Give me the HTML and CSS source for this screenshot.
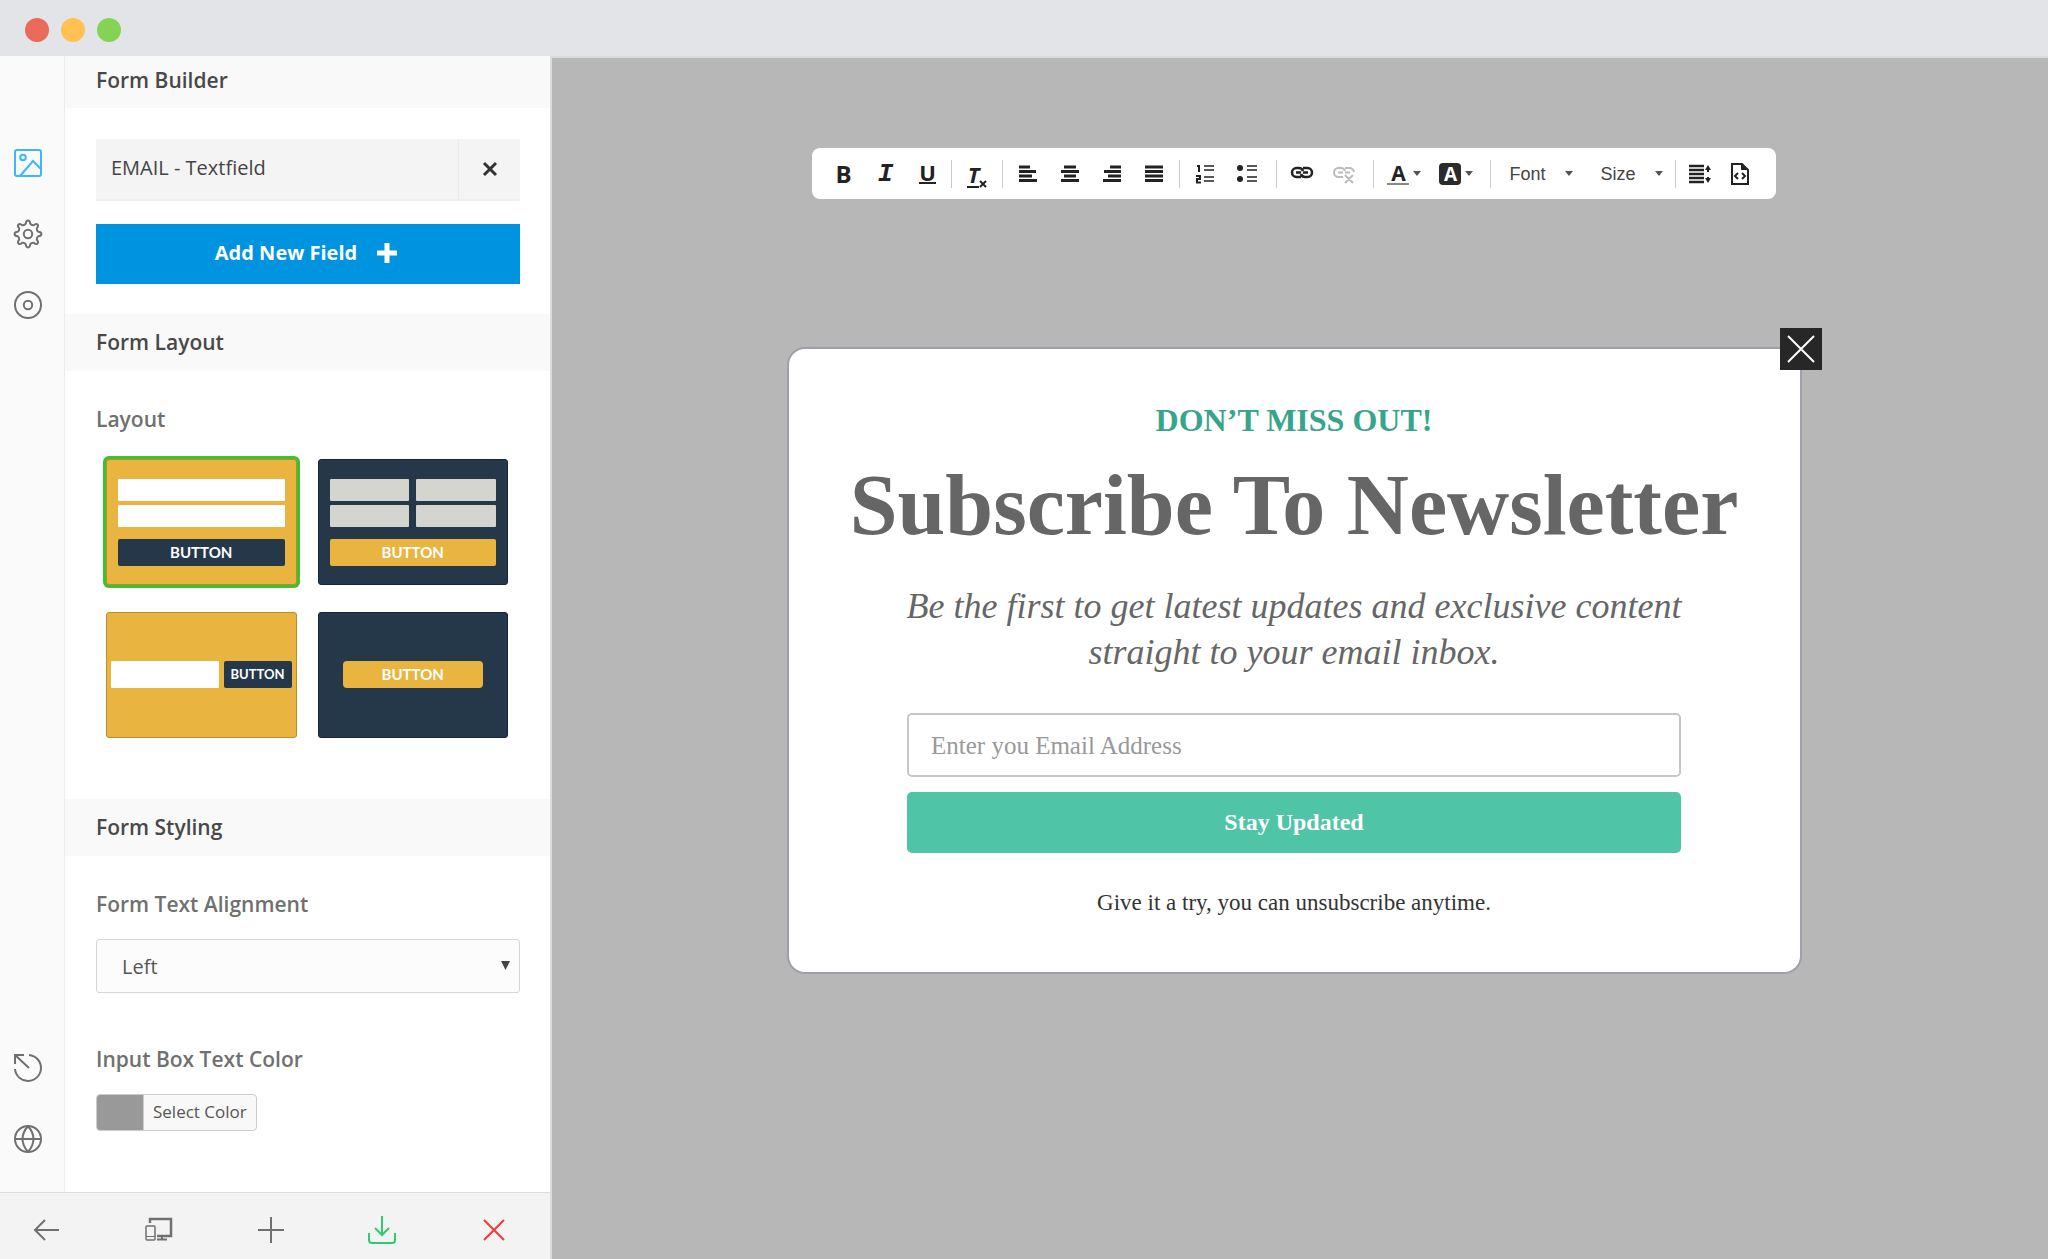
FILE: index.html
```
<!DOCTYPE html>
<html lang="en">
<head>
    <meta charset="UTF-8">
    <meta name="viewport" content="width=device-width, initial-scale=1.0">
    <title>Form Builder</title>
    <link rel="stylesheet" href="styles.css">
</head>
<body>
    <header class="titlebar">
        <span class="dot dot-red"></span>
        <span class="dot dot-yellow"></span>
        <span class="dot dot-green"></span>
    </header>

    <div class="app">
        <aside class="sidebar">
            <div class="sidebar-main">
                <nav class="rail">
                    <button type="button" class="rail-btn active" aria-label="Design">
                        <svg viewBox="-15 -15 30 30"><rect x="-13" y="-13" width="26" height="26" rx="2"/><circle cx="-5" cy="-5.500" r="2.800"/><path d="M-8 13L5-2L13 6"/></svg>
                    </button>
                    <button type="button" class="rail-btn" aria-label="Settings">
                        <svg viewBox="-15 -15 30 30"><path d="M-2.200-10.300C-1.900-14.500 1.900-14.500 2.200-10.300Q3.500-8.500 5.700-8.800C8.900-11.600 11.600-8.900 8.800-5.700Q8.500-3.500 10.300-2.200C14.500-1.900 14.500 1.900 10.300 2.200Q8.500 3.500 8.800 5.700C11.600 8.900 8.900 11.600 5.700 8.800Q3.500 8.500 2.200 10.300C1.900 14.500-1.900 14.500-2.200 10.300Q-3.500 8.500-5.700 8.800C-8.900 11.600-11.600 8.900-8.800 5.700Q-8.500 3.500-10.300 2.200C-14.500 1.900-14.500-1.900-10.300-2.200Q-8.500-3.500-8.800-5.700C-11.600-8.900-8.900-11.600-5.700-8.800Q-3.500-8.500-2.200-10.300Z"/><circle r="4.200"/></svg>
                    </button>
                    <button type="button" class="rail-btn" aria-label="Targeting">
                        <svg viewBox="-15 -15 30 30"><circle r="13"/><circle r="4.200"/></svg>
                    </button>
                    <button type="button" class="rail-btn rail-bottom" aria-label="Reset">
                        <svg viewBox="-15 -15 30 30"><path d="M1-13A13 13 0 1 1-13 1M1 0L-13-13M-13-4V-13H-4"/></svg>
                    </button>
                    <button type="button" class="rail-btn" aria-label="Language">
                        <svg viewBox="-15 -15 30 30"><circle r="13"/><path d="M-13 0H13M0-13Q-11 0 0 13M0-13Q11 0 0 13"/></svg>
                    </button>
                </nav>

                <div class="panel">
                    <h2 class="section-title first">Form Builder</h2>
                    <div class="section">
                        <div class="field">
                            <span class="field-name">EMAIL - Textfield</span>
                            <button type="button" class="field-remove" aria-label="Remove field">
                                <svg viewBox="0 0 16 16"><path d="M2 2L14 14M14 2L2 14"/></svg>
                            </button>
                        </div>
                        <button type="button" class="add-field">
                            Add New Field
                            <svg viewBox="0 0 20 20"><path d="M10 0V20M0 10H20"/></svg>
                        </button>
                    </div>

                    <h2 class="section-title">Form Layout</h2>
                    <div class="section layout-section">
                        <h3 class="label">Layout</h3>
                        <div class="layouts">
                            <button type="button" class="thumb yellow stacked selected" aria-pressed="true">
                                <span class="bar"></span>
                                <span class="bar"></span>
                                <span class="thumb-btn">BUTTON</span>
                            </button>
                            <button type="button" class="thumb navy columns" aria-pressed="false">
                                <span class="bar"></span>
                                <span class="bar"></span>
                                <span class="bar"></span>
                                <span class="bar"></span>
                                <span class="thumb-btn">BUTTON</span>
                            </button>
                            <button type="button" class="thumb yellow inline" aria-pressed="false">
                                <span class="bar"></span>
                                <span class="thumb-btn">BUTTON</span>
                            </button>
                            <button type="button" class="thumb navy single" aria-pressed="false">
                                <span class="thumb-btn">BUTTON</span>
                            </button>
                        </div>
                    </div>

                    <h2 class="section-title">Form Styling</h2>
                    <div class="section styling-section">
                        <label class="label" for="textAlign">Form Text Alignment</label>
                        <div class="select-wrap">
                            <select id="textAlign">
                                <option>Left</option>
                                <option>Center</option>
                                <option>Right</option>
                            </select>
                            <svg class="select-arrow" viewBox="0 0 10 10"><path d="M0 0H10L5 10Z"/></svg>
                        </div>
                        <h3 class="label">Input Box Text Color</h3>
                        <button type="button" class="color-btn">
                            <span class="swatch"></span>
                            <span class="color-text">Select Color</span>
                        </button>
                    </div>
                </div>
            </div>

            <footer class="actions">
                <button type="button" class="action" aria-label="Back">
                    <svg viewBox="0 0 28 28"><path d="M26 14H2M12 4L2 14L12 24"/></svg>
                </button>
                <button type="button" class="action" aria-label="Preview devices">
                    <svg viewBox="0 0 28 28"><path d="M5 7V3H26V20H12" stroke-width="2.500"/><path d="M17 20V23M12 23.500H22"/><rect x="1" y="10" width="9" height="14" rx="1" stroke-width="1.500"/><path d="M1 20.500H10" stroke-width="1"/></svg>
                </button>
                <button type="button" class="action" aria-label="Add">
                    <svg viewBox="0 0 28 28"><path d="M14 1V27M1 14H27"/></svg>
                </button>
                <button type="button" class="action save" aria-label="Save">
                    <svg viewBox="0 0 28 28"><path d="M14 0V19M7 12L14 19L21 12M1 17V24Q1 27 4 27H24Q27 27 27 24V17"/></svg>
                </button>
                <button type="button" class="action close" aria-label="Close">
                    <svg viewBox="0 0 28 28"><path d="M4 4L24 24M24 4L4 24"/></svg>
                </button>
            </footer>
        </aside>

        <main class="canvas">
            <div class="toolbar">
                <div class="group first">
                    <button type="button" class="tool bold">B</button>
                    <button type="button" class="tool italic">I</button>
                    <button type="button" class="tool underline"><span>U</span></button>
                </div>
                <div class="group">
                    <button type="button" class="tool clear" aria-label="Remove format">
                        <span class="clear-t">T</span>
                        <svg viewBox="0 0 8 8"><path d="M1 1L7 7M7 1L1 7"/></svg>
                    </button>
                </div>
                <div class="group">
                    <button type="button" class="tool" aria-label="Align left">
                        <svg viewBox="0 0 24 24"><path d="M3 5H14M3 9.500H20M3 14H16M3 18.500H21"/></svg>
                    </button>
                    <button type="button" class="tool" aria-label="Align center">
                        <svg viewBox="0 0 24 24"><path d="M6 5H18M3 9.500H21M6 14H18M3 18.500H21"/></svg>
                    </button>
                    <button type="button" class="tool" aria-label="Align right">
                        <svg viewBox="0 0 24 24"><path d="M10 5H21M4 9.500H21M8 14H21M3 18.500H21"/></svg>
                    </button>
                    <button type="button" class="tool" aria-label="Justify">
                        <svg viewBox="0 0 24 24"><path d="M3 5H21M3 9.500H21M3 14H21M3 18.500H21"/></svg>
                    </button>
                </div>
                <div class="group wide">
                    <button type="button" class="tool" aria-label="Numbered list">
                        <svg viewBox="0 0 24 24"><path d="M11 4H21M11 8H21M11 15H21M11 19H21" stroke-width="1.500"/><path d="M4 4H6V10M3 14H7V17H4V20.500H8" stroke-width="2"/></svg>
                    </button>
                    <button type="button" class="tool" aria-label="Bulleted list">
                        <svg viewBox="0 0 24 24"><path d="M12 4H22M12 8H22M12 15H22M12 19H22" stroke-width="1.500"/><circle class="fill" cx="5" cy="6" r="3"/><circle class="fill" cx="5" cy="17" r="3"/></svg>
                    </button>
                </div>
                <div class="group wide">
                    <button type="button" class="tool" aria-label="Link">
                        <svg viewBox="0 0 24 24"><path d="M11 15H6.500A4.500 4.500 0 0 1 6.500 6H9Q12 6 13 9M13 6H17.500A4.500 4.500 0 0 1 17.500 15H15Q12 15 11 12M6 10.500H11M13 10.500H18" stroke-width="2.500"/></svg>
                    </button>
                    <button type="button" class="tool disabled" aria-label="Unlink" disabled>
                        <svg viewBox="0 0 24 24"><path d="M11 15H6.500A4.500 4.500 0 0 1 6.500 6H9Q12 6 13 9M13 6H17.500Q21 6 22 10M6 10.500H11M13 10.500H18M13 13L21 21M21 13L13 21" stroke-width="2"/></svg>
                    </button>
                </div>
                <div class="group wide">
                    <button type="button" class="tool with-caret" aria-label="Text color">
                        <span class="letter color-a">A</span><span class="caret"></span>
                    </button>
                    <button type="button" class="tool with-caret" aria-label="Background color">
                        <span class="letter box-a">A</span><span class="caret"></span>
                    </button>
                </div>
                <div class="group selects">
                    <button type="button" class="combo">Font <span class="caret"></span></button>
                    <button type="button" class="combo">Size <span class="caret"></span></button>
                </div>
                <div class="group last">
                    <button type="button" class="tool" aria-label="Line height">
                        <svg viewBox="0 0 24 24"><path d="M1 4H16M1 8H16M1 12H16M1 16H16M1 20H16" stroke-width="2.500"/><path d="M20 6V10M20 15V19" stroke-width="2"/><path class="fill" d="M17 8L20 3L23 8ZM17 16L20 21L23 16Z"/></svg>
                    </button>
                    <button type="button" class="tool" aria-label="Source">
                        <svg viewBox="0 0 24 24"><path d="M4 2H14L20 8V22H4ZM10 11L7 14L10 17M14 11L17 14L14 17" stroke-width="2"/><path class="fill" d="M13 2V8H20Z"/></svg>
                    </button>
                </div>
            </div>

            <form class="popup">
                <button type="button" class="popup-close" aria-label="Close popup">
                    <svg viewBox="0 0 28 28"><path d="M1 1L27 27M27 1L1 27"/></svg>
                </button>
                <p class="eyebrow">DON’T MISS OUT!</p>
                <h1>Subscribe To Newsletter</h1>
                <p class="lead">Be the first to get latest updates and exclusive content straight to your email inbox.</p>
                <input type="email" class="email" placeholder="Enter you Email Address" aria-label="Email Address">
                <button type="submit" class="submit">Stay Updated</button>
                <p class="note">Give it a try, you can unsubscribe anytime.</p>
            </form>
        </main>
    </div>
</body>
</html>
```

FILE: styles.css
```
* {
    box-sizing: border-box;
}
body {
    margin: 0;
    min-height: 100vh;
    display: flex;
    flex-direction: column;
    font-family: "Open Sans", "Noto Sans", sans-serif;
    font-size: 20px;
    color: #444;
    background: #fff;
}
button {
    font-family: inherit;
    padding: 0;
    border: none;
    background: none;
    cursor: pointer;
}
h1, h2, h3, p {
    margin: 0;
}
svg {
    display: block;
    fill: none;
    stroke: currentColor;
}

/* window bar */
.titlebar {
    height: 56px;
    display: flex;
    align-items: center;
    gap: 12px;
    padding: 4px 25px 0;
    background: #e3e4e8;
}
.dot {
    width: 24px;
    height: 24px;
    border-radius: 50%;
}
.dot-red {
    background: #e96b5a;
}
.dot-yellow {
    background: #ffc151;
}
.dot-green {
    background: #84d355;
}
.app {
    flex: 1;
    display: flex;
}

/* sidebar */
.sidebar {
    flex: 0 0 552px;
    display: flex;
    flex-direction: column;
    border-right: 2px solid #dcdcdc;
}
.sidebar-main {
    flex: 1;
    display: flex;
}
.rail {
    flex: 0 0 65px;
    display: flex;
    flex-direction: column;
    align-items: center;
    gap: 41px;
    padding: 92px 8px 38px 0;
    background: #fafafa;
    border-right: 1px solid #ececec;
}
.rail-btn {
    color: #707070;
}
.rail-btn.active {
    color: #3db5ff;
}
.rail-bottom {
    margin-top: auto;
}
.rail-btn svg {
    width: 30px;
    height: 30px;
    stroke-width: 2;
}
.panel {
    flex: 1;
}
.section-title {
    height: 57px;
    padding: 0 31px;
    line-height: 57px;
    font-size: 21px;
    font-weight: 600;
    color: #484848;
    background: #f9f9f9;
}
.section-title.first {
    height: 52px;
    line-height: 48px;
}
.section {
    padding: 31px 30px 30px 31px;
}
.label {
    display: block;
    line-height: 28px;
    font-size: 21px;
    font-weight: 600;
    color: #707070;
}
.field {
    display: flex;
    height: 62px;
    margin-bottom: 23px;
    background: #f4f4f4;
    border-bottom: 2px solid #eee;
}
.field-name {
    flex: 1;
    padding-left: 15px;
    line-height: 58px;
    font-size: 20px;
}
.field-remove {
    width: 62px;
    display: flex;
    align-items: center;
    justify-content: center;
    border-left: 1px solid #eaeaea;
    color: #333;
}
.field-remove svg {
    width: 16px;
    height: 16px;
    stroke-width: 3;
}
.add-field {
    width: 100%;
    height: 60px;
    padding: 0 4px 3px 0;
    display: flex;
    align-items: center;
    justify-content: center;
    gap: 20px;
    font-size: 20px;
    font-weight: 700;
    color: #fff;
    background: #0093df;
}
.add-field svg {
    width: 20px;
    height: 20px;
    stroke-width: 5;
}

/* layout thumbnails */
.layout-section {
    padding: 34px 42px 61px 41px;
}
.layout-section .label {
    margin: 0 0 26px -10px;
}
.layouts {
    display: grid;
    grid-template-columns: 1fr 1fr;
    gap: 27px 21px;
}
.thumb {
    height: 126px;
    border-radius: 3px;
    font-family: Lato, sans-serif;
    font-size: 15px;
    font-weight: 700;
    color: #fff;
}
.thumb.yellow {
    background: #e9b440;
    border: 1px solid #b98d2e;
}
.thumb.navy {
    background: #25384a;
    border: 1px solid #152736;
}
.thumb.selected {
    box-shadow: 0 0 0 3px #3cc130;
}
.bar {
    height: 22px;
    border-radius: 1px;
    background: #fff;
}
.navy .bar {
    background: #d4d5ce;
}
.thumb-btn {
    height: 27px;
    line-height: 27px;
    border-radius: 2px;
    background: #25384a;
}
.navy .thumb-btn {
    background: #e9b440;
}
.stacked, .columns {
    display: grid;
    align-content: start;
    gap: 4px 7px;
    padding: 19px 11px;
}
.columns {
    grid-template-columns: 1fr 1fr;
}
.stacked .thumb-btn, .columns .thumb-btn {
    margin-top: 8px;
}
.columns .thumb-btn {
    grid-column: span 2;
}
.inline, .single {
    display: flex;
    align-items: center;
    justify-content: center;
    gap: 5px;
    padding: 0 4px 2px;
}
.inline .bar {
    flex: 1;
    height: 27px;
}
.inline .thumb-btn {
    width: 68px;
    font-size: 13px;
}
.single .thumb-btn {
    width: 140px;
    border-radius: 4px;
}

/* form styling */
.styling-section {
    padding-top: 34px;
}
.select-wrap {
    position: relative;
    margin: 21px 0 52px;
}
.select-wrap select {
    width: 100%;
    height: 54px;
    padding: 0 25px;
    appearance: none;
    border: 1px solid #d4d4d4;
    border-radius: 3px;
    background: #fcfcfc;
    font-family: inherit;
    font-size: 20px;
    color: #555;
}
.select-arrow {
    position: absolute;
    top: 22px;
    right: 10px;
    width: 9px;
    height: 9px;
    fill: #444;
    stroke: none;
    pointer-events: none;
}
.color-btn {
    display: flex;
    height: 37px;
    margin-top: 21px;
    border: 1px solid #ccc;
    border-radius: 4px;
    background: #f8f8f8;
    overflow: hidden;
}
.swatch {
    width: 47px;
    height: 100%;
    background: #999;
    border-right: 1px solid #ccc;
}
.color-text {
    padding: 0 9px;
    line-height: 34px;
    font-size: 17px;
    color: #555;
}

/* bottom actions */
.actions {
    height: 67px;
    display: flex;
    align-items: center;
    justify-content: space-between;
    padding: 8px 42px 0 33px;
    background: #f3f3f3;
    border-top: 1px solid #ddd;
}
.action {
    color: #707070;
}
.action svg {
    width: 28px;
    height: 28px;
    stroke-width: 2;
}
.action.save {
    color: #2ecc71;
}
.action.close {
    color: #f03a36;
}

/* editor canvas */
.canvas {
    flex: 1;
    display: flex;
    flex-direction: column;
    align-items: center;
    padding: 90px 30px 40px 18px;
    background: #b7b7b7;
    border-top: 2px solid #dcdcdc;
}
.toolbar {
    display: flex;
    align-items: center;
    height: 51px;
    padding: 0 16px 0 10px;
    border-radius: 8px;
    background: #fff;
}
.group {
    display: flex;
    align-items: center;
    height: 28px;
    padding: 0 4px;
    border-right: 1px solid #ccc;
}
.group.first {
    padding: 0 3px 0 0;
}
.group.wide {
    padding-right: 8px;
}
.group.selects {
    gap: 28px;
    padding: 0 12px 0 18px;
}
.group.last {
    padding: 0 0 0 4px;
    border-right: none;
}
.tool {
    width: 42px;
    height: 28px;
    display: flex;
    align-items: center;
    justify-content: center;
    font-size: 24px;
    font-weight: 700;
    line-height: 28px;
    color: #222;
}
.group.last .tool {
    width: 40px;
}
.tool svg {
    width: 24px;
    height: 24px;
    stroke-width: 3;
}
.tool .fill {
    fill: currentColor;
    stroke: none;
}
.tool.italic {
    font-family: "Liberation Mono", monospace;
    font-style: italic;
    font-size: 26px;
    line-height: 32px;
}
.tool.underline span {
    height: 21px;
    line-height: 18px;
    font-size: 22px;
    border-bottom: 2px solid #222;
}
.tool.disabled {
    color: #bbb;
}
.tool.clear {
    align-items: flex-end;
}
.tool.clear svg {
    width: 8px;
    height: 8px;
    stroke-width: 2;
}
.clear-t {
    width: 12px;
    height: 24px;
    line-height: 20px;
    font-size: 22px;
    font-style: italic;
    border-bottom: 2px solid #222;
}
.tool.with-caret {
    width: 52px;
    gap: 4px;
}
.letter {
    width: 22px;
    height: 22px;
    line-height: 20px;
    font-size: 21px;
}
.color-a {
    border-bottom: 2px solid #888;
}
.box-a {
    border-radius: 4px;
    line-height: 22px;
    font-size: 19px;
    color: #fff;
    background: #2b2b2b;
}
.caret {
    border: 4px solid transparent;
    border-top: 5px solid #555;
    border-bottom: none;
}
.combo {
    display: flex;
    align-items: center;
    gap: 19px;
    font-family: "Liberation Sans", Arial, sans-serif;
    font-size: 18px;
    line-height: 28px;
    color: #444;
}

/* popup */
.popup {
    position: relative;
    width: 100%;
    max-width: 1015px;
    margin-top: 148px;
    padding: 46px 60px 53px;
    display: flex;
    flex-direction: column;
    align-items: center;
    text-align: center;
    font-family: "Palatino Linotype", "Book Antiqua", Palatino, "Liberation Serif", serif;
    background: #fff;
    border: 2px solid #a09fac;
    border-radius: 18px;
}
.popup-close {
    position: absolute;
    top: -21px;
    right: -22px;
    width: 42px;
    height: 42px;
    display: flex;
    align-items: center;
    justify-content: center;
    color: #fff;
    background: #272727;
}
.popup-close svg {
    width: 28px;
    height: 28px;
    stroke-width: 2;
}
.eyebrow {
    line-height: 50px;
    font-size: 32px;
    font-weight: 700;
    color: #36a58b;
}
.popup h1 {
    line-height: 120px;
    font-size: 86px;
    font-weight: 700;
    color: #666;
}
.lead {
    max-width: 800px;
    margin-top: 18px;
    line-height: 46px;
    font-size: 36px;
    font-style: italic;
    color: #666;
}
.email {
    width: 100%;
    max-width: 774px;
    height: 64px;
    margin-top: 38px;
    padding: 2px 22px 0;
    border: 2px solid #c6c6c6;
    border-radius: 5px;
    font-family: inherit;
    font-size: 25px;
    color: #333;
}
.email::placeholder {
    color: #999;
}
.submit {
    width: 100%;
    max-width: 774px;
    height: 61px;
    margin-top: 15px;
    border-radius: 5px;
    font-size: 24px;
    font-weight: 700;
    color: #fff;
    background: #4fc4a7;
}
.note {
    margin-top: 34px;
    line-height: 32px;
    font-size: 23px;
    color: #333;
}
```
